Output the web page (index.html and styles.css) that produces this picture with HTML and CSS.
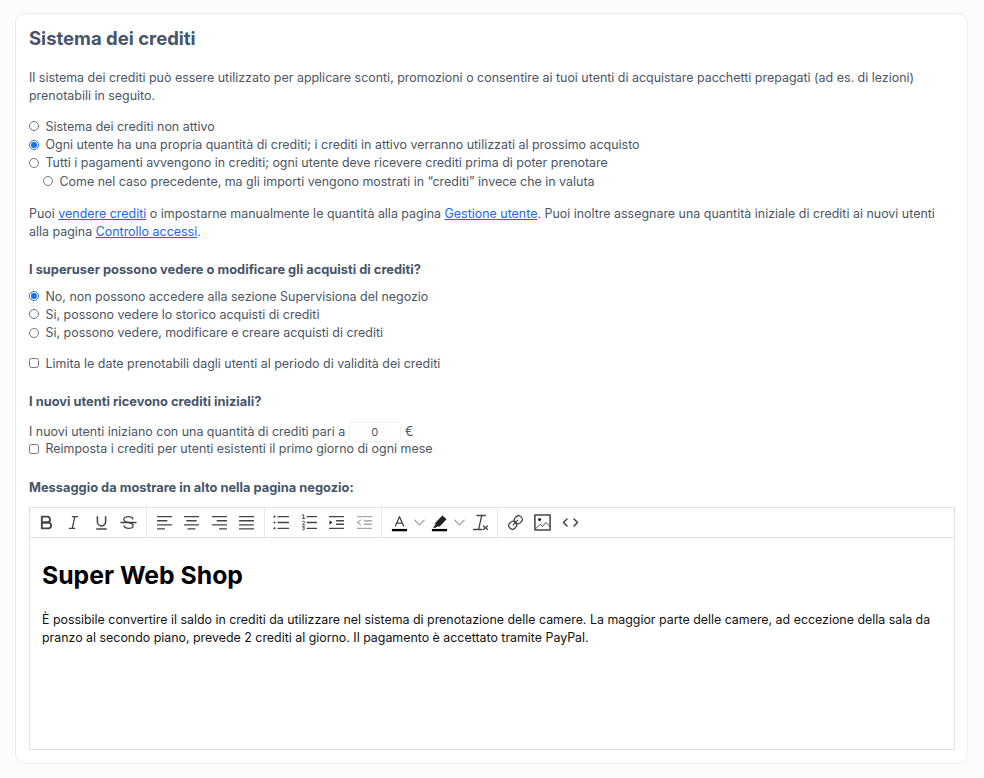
FILE: index.html
```html
<!DOCTYPE html>
<html lang="it">
<head>
  <title>Sistema dei crediti</title>
  <meta charset="UTF-8" />
  <link rel="stylesheet" href="styles.css">
</head>
<body>

  <div class="card">
    <h2>Sistema dei crediti</h2>

    <p class="intro">Il sistema dei crediti può essere utilizzato per applicare sconti, promozioni o consentire ai tuoi utenti di acquistare pacchetti prepagati (ad es. di lezioni) prenotabili in seguito.</p>

    <!-- Credit mode -->
    <div class="options">
      <label class="option"><input type="radio" name="mode"> Sistema dei crediti non attivo</label>
      <label class="option"><input type="radio" name="mode" checked> Ogni utente ha una propria quantità di crediti; i crediti in attivo verranno utilizzati al prossimo acquisto</label>
      <label class="option"><input type="radio" name="mode"> Tutti i pagamenti avvengono in crediti; ogni utente deve ricevere crediti prima di poter prenotare</label>
      <label class="option sub"><input type="radio" name="mode"> Come nel caso precedente, ma gli importi vengono mostrati in “crediti” invece che in valuta</label>
    </div>

    <p class="note">Puoi <a href="#">vendere crediti</a> o impostarne manualmente le quantità alla pagina <a href="#">Gestione utente</a>. Puoi inoltre assegnare una quantità iniziale di crediti ai nuovi utenti alla pagina <a href="#">Controllo accessi</a>.</p>

    <!-- Superuser access -->
    <h3 class="q-super">I superuser possono vedere o modificare gli acquisti di crediti?</h3>
    <div class="options">
      <label class="option"><input type="radio" name="su" checked> No, non possono accedere alla sezione Supervisiona del negozio</label>
      <label class="option"><input type="radio" name="su"> Si, possono vedere lo storico acquisti di crediti</label>
      <label class="option"><input type="radio" name="su"> Si, possono vedere, modificare e creare acquisti di crediti</label>
    </div>

    <label class="option limit"><input type="checkbox"> Limita le date prenotabili dagli utenti al periodo di validità dei crediti</label>

    <!-- Initial credits -->
    <h3 class="q-new">I nuovi utenti ricevono crediti iniziali?</h3>
    <div class="initial">I nuovi utenti iniziano con una quantità di crediti pari a <input class="amount" type="text" value="0"> €</div>
    <label class="option"><input type="checkbox"> Reimposta i crediti per utenti esistenti il primo giorno di ogni mese</label>

    <!-- Shop message -->
    <h3 class="q-msg">Messaggio da mostrare in alto nella pagina negozio:</h3>
    <div class="editor">
      <div class="toolbar">
        <div class="group first">
          <button><svg viewBox="0 0 18 18"><path d="M5,4H9.5A2.5,2.5,0,0,1,12,6.5v0A2.5,2.5,0,0,1,9.5,9H5V4Z"/><path d="M5,9h5.5A2.5,2.5,0,0,1,13,11.5v0A2.5,2.5,0,0,1,10.5,14H5V9Z"/></svg></button>
          <button><svg viewBox="0 0 18 18" class="thin"><line x1="8" x2="12.5" y1="4" y2="4"/><line x1="5.5" x2="10" y1="14" y2="14"/><line x1="8" x2="10" y1="14" y2="4"/></svg></button>
          <button><svg viewBox="0 0 18 18" class="medium"><path d="M5.5,4V8.5a3.5,3.5,0,0,0,7,0V4"/><line x1="5" x2="13" y1="14.5" y2="14.5"/></svg></button>
          <button><svg viewBox="0 0 18 18" class="thin"><line x1="2.5" x2="15.5" y1="9" y2="9"/><path d="M12.8,6C12.4,4.7,10.9,4,9,4,6.7,4,5,5,5,6.5,5,8,6.5,8.6,9,9c2.5.4,4,1,4,2.5S11.3,14,9,14c-1.9,0-3.4-.7-3.8-2"/></svg></button>
        </div>
        <div class="group">
          <button><svg viewBox="0 0 18 18" class="thin"><line x1="3" x2="15" y1="4" y2="4"/><line x1="3" x2="11" y1="7.5" y2="7.5"/><line x1="3" x2="15" y1="11" y2="11"/><line x1="3" x2="9" y1="14.5" y2="14.5"/></svg></button>
          <button><svg viewBox="0 0 18 18" class="thin"><line x1="3" x2="15" y1="4" y2="4"/><line x1="5" x2="13" y1="7.5" y2="7.5"/><line x1="3" x2="15" y1="11" y2="11"/><line x1="6" x2="12" y1="14.5" y2="14.5"/></svg></button>
          <button><svg viewBox="0 0 18 18" class="thin"><line x1="3" x2="15" y1="4" y2="4"/><line x1="7" x2="15" y1="7.5" y2="7.5"/><line x1="3" x2="15" y1="11" y2="11"/><line x1="9" x2="15" y1="14.5" y2="14.5"/></svg></button>
          <button><svg viewBox="0 0 18 18" class="thin"><line x1="3" x2="15" y1="4" y2="4"/><line x1="3" x2="15" y1="7.5" y2="7.5"/><line x1="3" x2="15" y1="11" y2="11"/><line x1="3" x2="15" y1="14.5" y2="14.5"/></svg></button>
        </div>
        <div class="group">
          <button><svg viewBox="0 0 18 18" class="thin"><line x1="6" x2="15" y1="4" y2="4"/><line x1="6" x2="15" y1="9" y2="9"/><line x1="6" x2="15" y1="14" y2="14"/><line x1="3" x2="3" y1="4" y2="4" class="dot"/><line x1="3" x2="3" y1="9" y2="9" class="dot"/><line x1="3" x2="3" y1="14" y2="14" class="dot"/></svg></button>
          <button><svg viewBox="0 0 18 18" class="thin"><line x1="7" x2="15" y1="4" y2="4"/><line x1="7" x2="15" y1="9" y2="9"/><line x1="7" x2="15" y1="14" y2="14"/><path class="fine" d="M3,2.6 4,2.2V5.5M3,5.5H5M3,8.2C3.6,7.5,5,7.8,4.8,8.8 4.6,9.6 3,10.2 3,11H5M3,12.6H4.8L3.8,13.8C5.2,13.8 5.2,15.6 3,15.3"/></svg></button>
          <button><svg viewBox="0 0 18 18" class="thin"><line x1="3" x2="15" y1="14" y2="14"/><line x1="3" x2="15" y1="4" y2="4"/><line x1="9" x2="15" y1="7.5" y2="7.5"/><line x1="9" x2="15" y1="10.5" y2="10.5"/><polyline class="solid" points="3 7 5.5 9 3 11"/></svg></button>
          <button class="dim"><svg viewBox="0 0 18 18" class="thin"><line x1="3" x2="15" y1="14" y2="14"/><line x1="3" x2="15" y1="4" y2="4"/><line x1="9" x2="15" y1="7.5" y2="7.5"/><line x1="9" x2="15" y1="10.5" y2="10.5"/><polyline points="5.5 7 3 9 5.5 11"/></svg></button>
        </div>
        <div class="group">
          <button><svg viewBox="0 0 18 18" class="thin"><line class="label" x1="2.5" x2="15.5" y1="15.5" y2="15.5"/><polyline points="5.5 12 9 4 12.5 12"/><line x1="11.3" x2="6.7" y1="9.5" y2="9.5"/></svg></button>
          <span class="caret"><svg viewBox="0 0 18 18"><polyline points="5 7 9 11 13 7"/></svg></span>
          <button><svg viewBox="0 0 18 18"><line class="label" x1="2.5" x2="15.5" y1="15.5" y2="15.5"/><path class="solid" d="M11.5,3 15,6.2 9.2,12.4 7,12.4 5.8,13.6 3.4,13.6 5.4,11 5.4,9.2Z"/></svg></button>
          <span class="caret"><svg viewBox="0 0 18 18"><polyline points="5 7 9 11 13 7"/></svg></span>
          <button><svg viewBox="0 0 18 18" class="thin"><line x1="6" x2="13" y1="3" y2="3"/><line x1="7.5" x2="10" y1="14.5" y2="3"/><line x1="11.5" x2="15" y1="12" y2="15"/><line x1="15" x2="11.5" y1="12" y2="15"/><line x1="3" x2="10" y1="15" y2="15"/></svg></button>
        </div>
        <div class="group">
          <button><svg viewBox="0 0 18 18" class="thin"><g transform="translate(18 0) scale(-1 1)"><line x1="7" x2="11" y1="7" y2="11"/><path d="M8.9,4.577a3.476,3.476,0,0,1,.36,4.679A3.476,3.476,0,0,1,4.577,8.9C3.185,7.5,2.035,6.4,4.217,4.217S7.5,3.185,8.9,4.577Z"/><path d="M13.423,9.1a3.476,3.476,0,0,0-4.679-.36,3.476,3.476,0,0,0,.36,4.679c1.392,1.392,2.5,2.542,4.679.36S14.815,10.5,13.423,9.1Z"/></g></svg></button>
          <button><svg viewBox="0 0 18 18" class="medium"><rect x="2.5" y="2.5" width="13" height="13"/><circle class="solid" cx="6.5" cy="6.5" r="1.3"/><polyline class="fine" points="3 14.5 7 10.5 9 12.5 12 9 15.5 12.5"/></svg></button>
          <button><svg viewBox="0 0 18 18" class="medium"><polyline points="6 6 3 9 6 12"/><polyline points="12 6 15 9 12 12"/></svg></button>
        </div>
      </div>
      <div class="content">
        <h1>Super Web Shop</h1>
        <p>È possibile convertire il saldo in crediti da utilizzare nel sistema di prenotazione delle camere. La maggior parte delle camere, ad eccezione della sala da pranzo al secondo piano, prevede 2 crediti al giorno. Il pagamento è accettato tramite PayPal.</p>
      </div>
    </div>
  </div>

</body>
</html>
```

FILE: styles.css
```css
html, body {
  height: 100%;
}
body {
  margin: 0;
  padding: 13px 16px 14px 15px;
  box-sizing: border-box;
  font-family: Inter, "Liberation Sans", sans-serif;
  font-size: 12.45px;
  line-height: 18.3px;
  color: #4b5563;
  background: #fcfcfc;
}
.card {
  box-sizing: border-box;
  height: 100%;
  display: flex;
  flex-direction: column;
  padding: 12px 12px 13px 13px;
  background: #fff;
  border: 1px solid #eeeeee;
  border-radius: 10px;
}
h2 {
  margin: 0 0 19px;
  font-size: 18.5px;
  line-height: 24px;
  font-weight: 700;
  color: #475569;
}
h3 {
  margin: 0 0 8px;
  font-size: 12.85px;
  line-height: 18.3px;
  font-weight: 700;
  color: #475569;
}
p {
  margin: 0;
}
a {
  color: #2563eb;
}
.intro {
  margin-bottom: 12.3px;
}
.options {
  display: flex;
  flex-direction: column;
}
.option {
  display: block;
}
.option input {
  width: 10px;
  height: 10px;
  margin: 0 3px 0 0;
  vertical-align: -0.5px;
  accent-color: #1a6fe8;
}
.sub {
  padding-left: 14px;
}
.note {
  margin-top: 13.7px;
}
.q-super {
  margin-top: 20px;
}
.limit {
  margin-top: 12px;
}
.q-new {
  margin-top: 20px;
  margin-bottom: 11px;
}
.initial {
  height: 18px;
}
.amount {
  box-sizing: border-box;
  width: 52px;
  height: 20px;
  padding: 0;
  margin: 0 1px 0 0;
  border: 1px solid #f0f0f0;
  border-radius: 4px;
  font: inherit;
  font-size: 11px;
  color: #4b5563;
  text-align: center;
}
.q-msg {
  margin-top: 21px;
  margin-bottom: 9px;
}
.editor {
  flex: 1;
  display: flex;
  flex-direction: column;
  border: 1px solid #e2e2e2;
}
.toolbar {
  display: flex;
  height: 29px;
  border-bottom: 1px solid #e2e2e2;
}
.group {
  display: flex;
  align-items: center;
  padding: 0 3.25px;
  border-right: 1px solid #e8e8e8;
}
.group.first {
  padding: 0 3.75px 0 2.25px;
}
.group:last-child {
  border-right: none;
}
.toolbar button {
  width: 27.5px;
  height: 100%;
  padding: 0;
  display: flex;
  align-items: center;
  justify-content: center;
  border: none;
  background: none;
}
.toolbar svg {
  width: 21px;
  height: 21px;
  fill: none;
  stroke: #444;
  stroke-width: 1.6;
  stroke-linecap: round;
  stroke-linejoin: round;
}
.toolbar svg.thin {
  stroke-width: 1.1;
}
.toolbar svg.medium {
  stroke-width: 1.3;
}
.toolbar .fine {
  stroke-width: 0.8;
}
.toolbar .dot {
  stroke-width: 1.8;
}
.toolbar .label {
  stroke: #000;
  stroke-width: 2;
  stroke-linecap: butt;
}
.toolbar .solid {
  fill: #222;
  stroke: none;
}
.toolbar .dim svg {
  stroke: #aaa;
}
.caret {
  width: 13px;
  display: flex;
  justify-content: center;
}
.caret svg {
  stroke: #999;
  stroke-width: 1;
  flex: none;
}
.content {
  padding: 21px 12px;
  color: #111;
}
.content h1 {
  margin: 0 0 20px;
  font-size: 24.75px;
  line-height: 32px;
  font-weight: 700;
  color: #000;
}
.content p {
  font-size: 12.4px;
}
```
